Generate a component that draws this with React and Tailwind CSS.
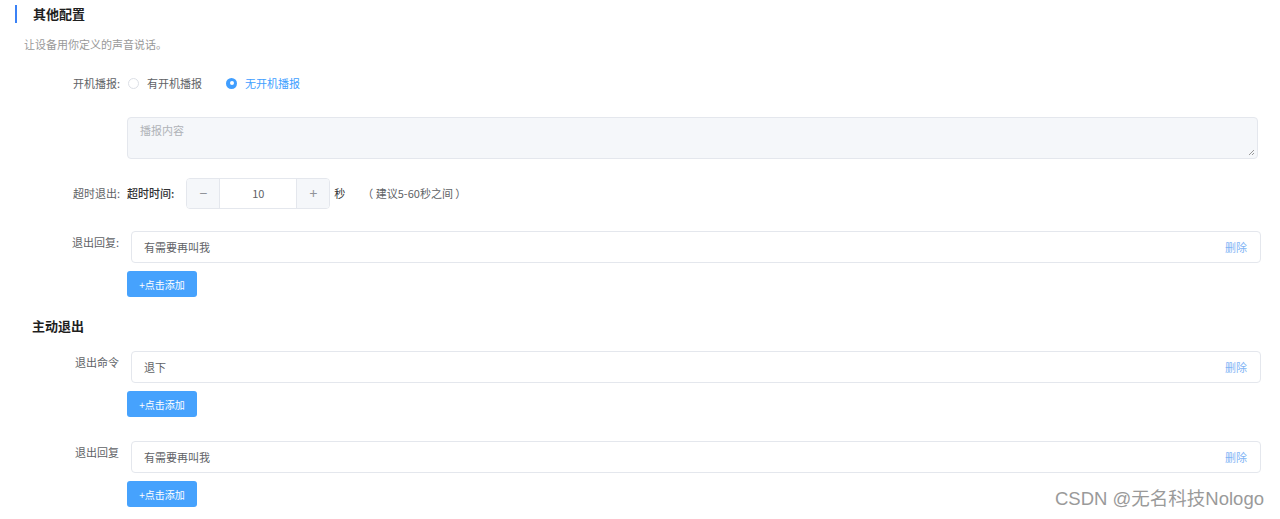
import React from 'react';

const font = { fontFamily: '"Noto Sans CJK SC", "Noto Sans", sans-serif' };

const AddButton = () => (
  <button className="w-[70px] h-[26px] bg-[#46a2fd] text-white text-[10px] rounded-[3px] flex items-center justify-center">
    +点击添加
  </button>
);

const ReplyRow = ({ label, value, top }) => (
  <div className="flex items-start" style={{ marginTop: top }}>
    <div className="w-[96px] text-right text-[11px] text-[#606266] leading-[16px] pt-[3px] pr-[1px]">{label}</div>
    <div className="ml-[11px] flex-1 pr-[19px]">
      <div className="h-[32px] border border-[#e4e7ed] rounded-[4px] flex items-center justify-between px-[12px]">
        <span className="text-[11px] text-[#606266]">{value}</span>
        <span className="text-[11px] text-[#7fb4f5] pr-[1px]">删除</span>
      </div>
    </div>
  </div>
);

export default function App() {
  return (
    <div className="relative w-[1280px] h-[519px] bg-white overflow-hidden" style={font}>
      {/* header */}
      <div className="flex items-center h-[18px] mt-[5px] pl-[15px]">
        <div className="w-[2px] h-[18px] bg-[#3b82f6]"></div>
        <div className="ml-[16px] text-[13px] font-bold text-[#1f1f1f]">其他配置</div>
      </div>
      <div className="pl-[24px] mt-[13px] text-[11px] leading-[16px] text-[#999]">让设备用你定义的声音说话。</div>

      <div className="pl-[24px]">
        {/* 开机播报 */}
        <div className="flex items-center h-[16px] mt-[23px]">
          <div className="w-[96px] text-right text-[11px] text-[#606266]">开机播报:</div>
          <div className="ml-[8px] flex items-center">
            <span className="w-[11px] h-[11px] rounded-full border border-[#dcdfe6] bg-white"></span>
            <span className="ml-[8px] text-[11px] text-[#606266]">有开机播报</span>
            <span className="ml-[24px] w-[11px] h-[11px] rounded-full bg-[#409eff] flex items-center justify-center">
              <span className="w-[4px] h-[4px] rounded-full bg-white"></span>
            </span>
            <span className="ml-[8px] text-[11px] text-[#409eff]">无开机播报</span>
          </div>
        </div>

        {/* textarea */}
        <div className="flex mt-[26px]">
          <div className="w-[103px]"></div>
          <div className="relative w-[1131px] h-[42px] bg-[#f5f7fa] border border-[#e4e7ed] rounded-[4px] px-[12px] pt-[4px] text-[11px] text-[#b0b3b8]">
            播报内容
            <svg className="absolute right-[2px] bottom-[2px]" width="7" height="7" viewBox="0 0 7 7">
              <path d="M6 1 L1 6 M6 4 L4 6" stroke="#999" strokeWidth="1" />
            </svg>
          </div>
        </div>

        {/* 超时退出 */}
        <div className="flex items-center h-[31px] mt-[19px]">
          <div className="w-[96px] text-right text-[11px] text-[#606266]">超时退出:</div>
          <div className="ml-[7px] text-[11px] text-[#303133] font-medium">超时时间:</div>
          <div className="ml-[12px] flex h-[31px] w-[144px] border border-[#e4e7ed] rounded-[4px] overflow-hidden">
            <div className="w-[33px] bg-[#f5f7fa] border-r border-[#e4e7ed] flex items-center justify-center text-[#909399] text-[14px]">−</div>
            <div className="flex-1 flex items-center justify-center text-[11px] text-[#606266]">10</div>
            <div className="w-[33px] bg-[#f5f7fa] border-l border-[#e4e7ed] flex items-center justify-center text-[#909399] text-[14px]">+</div>
          </div>
          <div className="ml-[4px] text-[11px] text-[#303133]">秒</div>
          <div className="ml-[17px] text-[11px] text-[#606266]">（ 建议5-60秒之间 ）</div>
        </div>

        <ReplyRow label="退出回复:" value="有需要再叫我" top="22px" />
        <div className="flex mt-[8px]">
          <div className="w-[103px]"></div>
          <AddButton />
        </div>
      </div>

      <div className="pl-[32px] mt-[21px] h-[16px] flex items-center text-[13px] font-bold text-[#1f1f1f]">主动退出</div>

      <div className="pl-[24px]">
        <ReplyRow label="退出命令" value="退下" top="17px" />
        <div className="flex mt-[8px]">
          <div className="w-[103px]"></div>
          <AddButton />
        </div>
        <ReplyRow label="退出回复" value="有需要再叫我" top="24px" />
        <div className="flex mt-[8px]">
          <div className="w-[103px]"></div>
          <AddButton />
        </div>
      </div>

      {/* watermark */}
      <div
        className="absolute left-[1055px] top-[487px] text-[18.5px] text-[#9a9a9a] leading-[24px]"
        style={{ fontFamily: '"Liberation Sans", "Noto Sans CJK SC", sans-serif' }}
      >
        CSDN @无名科技Nologo
      </div>
    </div>
  );
}
